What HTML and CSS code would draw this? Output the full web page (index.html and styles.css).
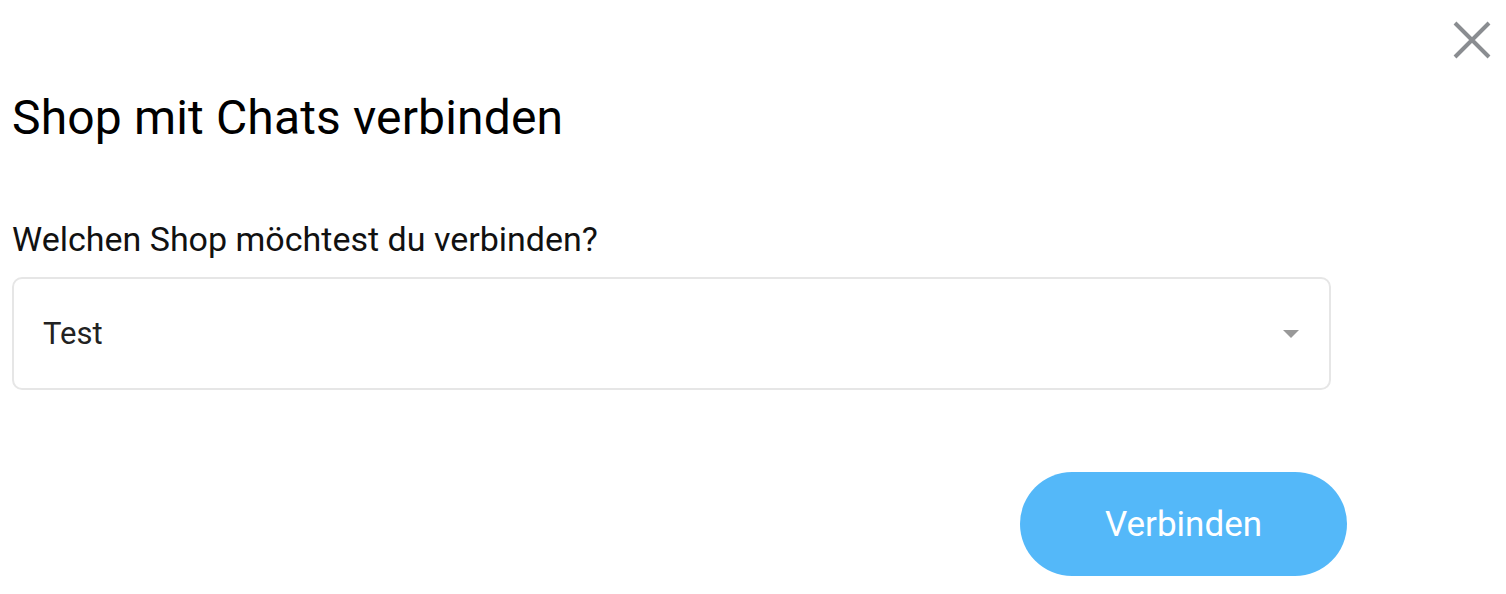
FILE: index.html
```html
<!DOCTYPE html>
<html lang="de">
<head>
    <meta charset="UTF-8">
    <meta name="viewport" content="width=device-width, initial-scale=1.0">
    <title>Shop mit Chats verbinden</title>
    <link rel="stylesheet" href="styles.css">
</head>
<body>
    <div class="dialog">
        <div class="dialog-top">
            <button class="close-btn" aria-label="Schließen">
                <svg width="40" height="40" viewBox="0 0 40 40">
                    <path d="M3 3 L37 37 M37 3 L3 37" stroke="#8a8d91" stroke-width="4" fill="none"/>
                </svg>
            </button>
        </div>

        <h2 class="dialog-title">Shop mit Chats verbinden</h2>

        <label class="field-label" for="shopSelect">Welchen Shop möchtest du verbinden?</label>
        <div class="select-box" id="shopSelect">
            <span class="select-value">Test</span>
            <span class="select-caret"></span>
        </div>

        <div class="actions">
            <button class="primary-btn">Verbinden</button>
        </div>
    </div>
</body>
</html>
```

FILE: styles.css
```css
body {
    margin: 0;
    font-family: Roboto, "Liberation Sans", Arial, sans-serif;
    background-color: #ffffff;
    color: #000000;
}

.dialog {
    padding: 0 14px 0 12px;
}

.dialog-top {
    display: flex;
    justify-content: flex-end;
    padding-top: 20px;
}

.close-btn {
    width: 40px;
    height: 40px;
    padding: 0;
    border: none;
    background: none;
    cursor: pointer;
}

.close-btn svg {
    display: block;
}

.dialog-title {
    margin: 30px 0 0 0;
    font-size: 48px;
    font-weight: 400;
    line-height: 56px;
    letter-spacing: 0.15px;
}

.field-label {
    display: block;
    margin-top: 73px;
    font-size: 34px;
    line-height: 40px;
    color: #111;
}

.select-box {
    display: flex;
    align-items: center;
    justify-content: space-between;
    width: 1319px;
    height: 113px;
    margin-top: 18px;
    padding: 0 30px 0 29px;
    border: 2px solid #e6e6e6;
    border-radius: 10px;
    box-sizing: border-box;
}

.select-value {
    font-size: 31px;
    color: #222;
}

.select-caret {
    width: 0;
    height: 0;
    border-left: 8px solid transparent;
    border-right: 8px solid transparent;
    border-top: 8px solid #999;
}

.actions {
    display: flex;
    justify-content: flex-end;
    width: 1335px;
    margin-top: 82px;
}

.primary-btn {
    width: 327px;
    height: 104px;
    border: none;
    border-radius: 52px;
    background-color: #54b8f9;
    color: #ffffff;
    font-family: inherit;
    font-size: 35px;
    cursor: pointer;
}
```
